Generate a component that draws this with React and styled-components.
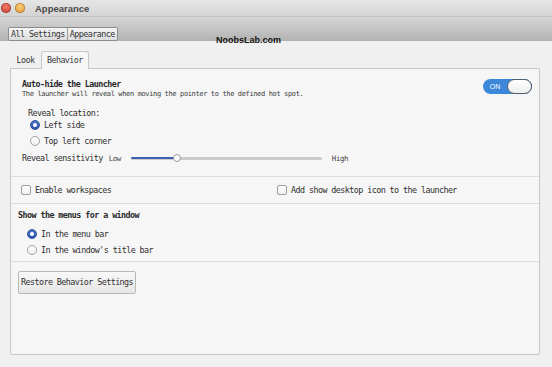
import React from 'react'
import styled, { createGlobalStyle } from 'styled-components'

const GlobalStyle = createGlobalStyle`
html, body {
  margin: 0;
  padding: 0;
}
body {
  background: #efefef;
  font-family: "DejaVu Sans Mono", "Liberation Mono", monospace;
  color: #2f2f2f;
}
`

// monospace text, squeezed to the ~4.5px advance of the reference font
const mono = `
font-size: 8.4px;
letter-spacing: -0.56px;
`

const Window = styled.div`
position: relative;
width: 552px;
height: 367px;
display: flex;
flex-direction: column;
background: #efefef;
overflow: hidden;
`

const TitleBar = styled.div`
height: 16px;
display: flex;
align-items: center;
padding-left: 1px;
box-sizing: border-box;
background: linear-gradient(#e6e6e6, #d4d4d4);
`
const Dot = styled.span`
width: 10px;
height: 10px;
border-radius: 50%;
margin-right: 4px;
background: radial-gradient(circle at 50% 35%, ${p => p.light}, ${p => p.dark});
box-shadow: inset 0 0 0 0.6px rgba(0, 0, 0, 0.35);
`
const Title = styled.span`
margin-left: 6px;
font-family: "Liberation Sans", Arial, sans-serif;
font-weight: bold;
font-size: 9.5px;
color: #4a4a4a;
`

const Toolbar = styled.div`
height: 25px;
box-sizing: border-box;
padding: 5px 0 0 8px;
background: linear-gradient(#d6d6d6, #b2b2b2);
border-top: 1px solid #c4c4c4;
`
const Crumbs = styled.div`
display: inline-flex;
border: 1px solid #8c8c8c;
border-radius: 2px;
overflow: hidden;
`
const Crumb = styled.span`
height: 12px;
line-height: 12px;
padding: 0 2px;
${mono}
color: #333;
background: linear-gradient(#f5f5f5, #dcdcdc);
& + & {
  border-left: 1px solid #9c9c9c;
}
`

const Watermark = styled.div`
position: absolute;
left: 216px;
top: 35px;
font-family: "Liberation Sans", Arial, sans-serif;
font-weight: bold;
font-size: 9px;
color: #111;
`

const Content = styled.div`
flex: 1;
display: flex;
flex-direction: column;
padding: 10px 12px 12px 10px;
background: #f0f0f0;
`

const TabRow = styled.div`
display: flex;
align-items: flex-end;
height: 17px;
`
const Tab = styled.div`
position: relative;
z-index: 1;
box-sizing: border-box;
height: ${p => (p.active ? '18px' : '17px')};
margin-bottom: ${p => (p.active ? '-1px' : '0')};
padding: 0 ${p => (p.active ? '5px' : '5.5px')};
line-height: 17px;
${mono}
color: #3a3a3a;
background: ${p => (p.active ? '#f6f6f6' : 'transparent')};
border: 1px solid ${p => (p.active ? '#c8c8c8' : 'transparent')};
border-bottom: none;
border-radius: 3px 3px 0 0;
`

const Panel = styled.div`
flex: 1;
display: flex;
flex-direction: column;
background: #f6f6f6;
border: 1px solid #c6c6c6;
border-radius: 0 2px 2px 2px;
`

const Section = styled.div`
padding: ${p => p.pad};
border-bottom: ${p => (p.last ? 'none' : '1px solid #dedede')};
`

const HeaderRow = styled.div`
display: flex;
justify-content: space-between;
align-items: flex-start;
`
const Heading = styled.div`
${mono}
font-weight: bold;
line-height: 10px;
color: #2a2a2a;
`
const Desc = styled.div`
font-size: 7px;
letter-spacing: -0.36px;
line-height: 10px;
color: #3a3a3a;
`

const Toggle = styled.div`
display: flex;
align-items: center;
width: 49px;
height: 15px;
box-sizing: border-box;
border-radius: 8px;
background: #3d87db;
`
const ToggleLabel = styled.span`
width: 24px;
text-align: center;
font-family: "Liberation Sans", Arial, sans-serif;
font-size: 7px;
color: #fff;
`
const Knob = styled.span`
flex: 1;
height: 15px;
box-sizing: border-box;
border: 1.5px solid #565c64;
border-radius: 8px;
background: linear-gradient(#ffffff, #eeeeee);
`

const Label = styled.div`
${mono}
line-height: 10px;
margin: ${p => p.margin || '0'};
`

const OptionRow = styled.div`
display: flex;
align-items: center;
gap: 4px;
height: 16px;
padding-left: ${p => p.indent};
${mono}
`
const Radio = styled.span`
width: 10px;
height: 10px;
box-sizing: border-box;
border-radius: 50%;
display: flex;
align-items: center;
justify-content: center;
border: 1px solid ${p => (p.checked ? '#2c4f98' : '#a3a3a3')};
background: ${p => (p.checked ? 'linear-gradient(#4a74c8, #2f58ad)' : 'linear-gradient(#ffffff, #f0f0f0)')};
&::after {
  content: '';
  display: ${p => (p.checked ? 'block' : 'none')};
  width: 4px;
  height: 4px;
  border-radius: 50%;
  background: #fff;
}
`

const SliderRow = styled.div`
display: flex;
align-items: center;
height: 14px;
margin-top: 2px;
${mono}
`
const Small = styled.span`
font-size: 7.4px;
letter-spacing: -0.4px;
color: #444;
margin: 0 ${p => p.right} 0 ${p => p.left};
`
const Track = styled.div`
position: relative;
width: 191px;
height: 3px;
border-radius: 2px;
background: #cbcbcb;
`
const Fill = styled.div`
height: 2px;
margin-top: 0.5px;
border-radius: 2px;
background: #3d62b3;
`
const Handle = styled.span`
position: absolute;
top: -3px;
width: 8px;
height: 8px;
box-sizing: border-box;
border-radius: 50%;
border: 1px solid #9a9a9a;
background: #fdfdfd;
transform: translateX(-4px);
`

const CheckGrid = styled.div`
display: grid;
grid-template-columns: 256px 1fr;
align-items: center;
height: 26px;
`
const CheckItem = styled.label`
display: flex;
align-items: center;
gap: 4px;
${mono}
`
const Box = styled.span`
width: 10px;
height: 10px;
box-sizing: border-box;
border: 1px solid #9d9d9d;
border-radius: 2px;
background: linear-gradient(#ffffff, #f1f1f1);
`

const PlainButton = styled.button`
height: 23px;
padding: 0 2px;
font-family: "DejaVu Sans Mono", "Liberation Mono", monospace;
${mono}
color: #2f2f2f;
border: 1px solid #b8b8b8;
border-radius: 2px;
background: linear-gradient(#f8f8f8, #e6e6e6);
`

const App = () => {
  const sensitivity = 24
  return (
    <Window>
      <GlobalStyle />
      <TitleBar>
        <Dot light="#f27a6a" dark="#c8382a" />
        <Dot light="#fbcf78" dark="#e0922c" />
        <Title>Appearance</Title>
      </TitleBar>
      <Toolbar>
        <Crumbs>
          <Crumb>All Settings</Crumb>
          <Crumb>Appearance</Crumb>
        </Crumbs>
      </Toolbar>
      <Watermark>NoobsLab.com</Watermark>
      <Content>
        <TabRow>
          <Tab>Look</Tab>
          <Tab active>Behavior</Tab>
        </TabRow>
        <Panel>
          <Section pad="10px 7px 11px 11px">
            <HeaderRow>
              <div>
                <Heading>Auto-hide the Launcher</Heading>
                <Desc>The launcher will reveal when moving the pointer to the defined hot spot.</Desc>
              </div>
              <Toggle>
                <ToggleLabel>ON</ToggleLabel>
                <Knob />
              </Toggle>
            </HeaderRow>
            <Label margin="9px 0 0 6px">Reveal location:</Label>
            <OptionRow indent="8px" style={{ marginTop: -1 }}><Radio checked />Left side</OptionRow>
            <OptionRow indent="8px"><Radio />Top left corner</OptionRow>
            <SliderRow>
              Reveal sensitivity
              <Small left="6px" right="10px">Low</Small>
              <Track>
                <Fill style={{ width: `${sensitivity}%` }} />
                <Handle style={{ left: `${sensitivity}%` }} />
              </Track>
              <Small left="10px" right="0">High</Small>
            </SliderRow>
          </Section>
          <Section pad="0 0 0 10px">
            <CheckGrid>
              <CheckItem><Box />Enable workspaces</CheckItem>
              <CheckItem><Box />Add show desktop icon to the launcher</CheckItem>
            </CheckGrid>
          </Section>
          <Section pad="6px 0 3px 7px">
            <Heading>Show the menus for a window</Heading>
            <OptionRow indent="9px" style={{ marginTop: 6 }}><Radio checked />In the menu bar</OptionRow>
            <OptionRow indent="9px"><Radio />In the window's title bar</OptionRow>
          </Section>
          <Section pad="8px 0 0 7px" last>
            <PlainButton>Restore Behavior Settings</PlainButton>
          </Section>
        </Panel>
      </Content>
    </Window>
  )
}

export default App
